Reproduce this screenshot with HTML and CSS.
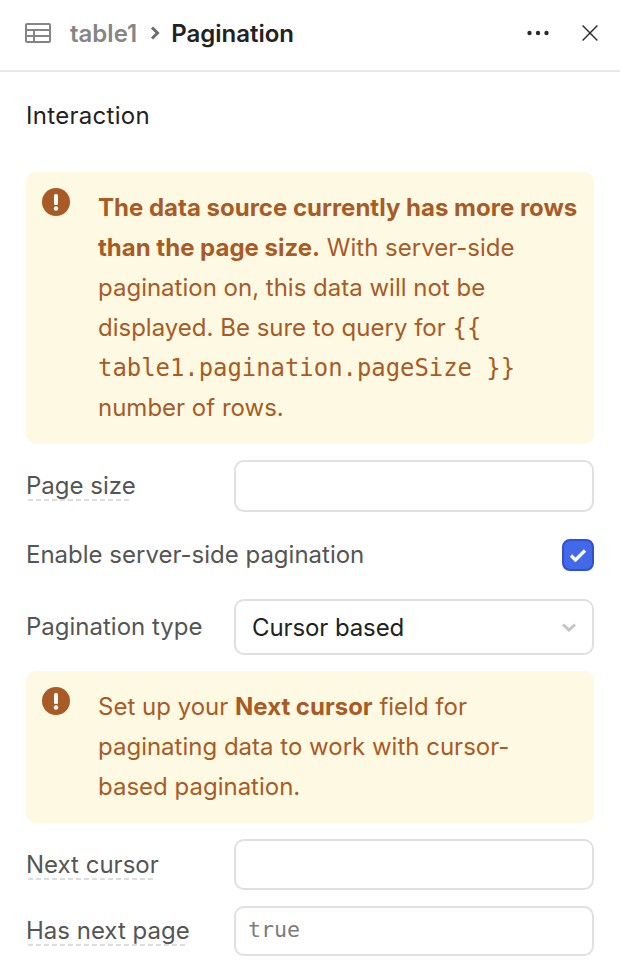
FILE: index.html
```html
<!DOCTYPE html>
<html lang="en">
<head>
<meta charset="utf-8">
<title>Pagination</title>
<link rel="stylesheet" href="styles.css">
</head>
<body>
<header class="header">
  <svg class="table-icon" width="26" height="20" viewBox="0 0 26 20" fill="none" stroke="#858585" stroke-width="2"><rect x="1" y="1" width="24" height="18" rx="1"/><path d="M1 7h24M1 13h24M9 7v12"/></svg>
  <span class="crumb">table1</span>
  <svg class="crumb-sep" width="10" height="14" viewBox="0 0 10 14" fill="none" stroke="#6b6b6b" stroke-width="3"><path d="M2 1.5 7.5 7 2 12.5"/></svg>
  <span class="title">Pagination</span>
  <span class="spacer"></span>
  <svg class="more" width="22" height="6" viewBox="0 0 22 6" fill="#2a2a2a"><circle cx="2.5" cy="3" r="2.2"/><circle cx="11" cy="3" r="2.2"/><circle cx="19.5" cy="3" r="2.2"/></svg>
  <svg class="close" width="16" height="16" viewBox="0 0 16 16" fill="none" stroke="#2a2a2a" stroke-width="1.4"><path d="M.6.6l14.8 14.8M15.4.6.6 15.4"/></svg>
</header>
<main class="panel">
  <h2 class="section">Interaction</h2>

  <div class="alert alert-large">
    <svg class="alert-icon" width="28" height="28" viewBox="0 0 28 28"><circle cx="14" cy="14" r="14" fill="#a95b25"/><rect x="12" y="6" width="4" height="11" rx="1.5" fill="#fff"/><circle cx="14" cy="20.5" r="2.2" fill="#fff"/></svg>
    <p class="alert-text"><strong>The data source currently has more rows than the page size.</strong> With server-side pagination on, this data will not be displayed. Be sure to query for <code>{{ table1.pagination.pageSize }}</code> number of rows.</p>
  </div>

  <div class="row row-page-size">
    <span class="label dashed">Page size</span>
    <div class="field"></div>
  </div>

  <div class="row row-check">
    <span class="label">Enable server-side pagination</span>
    <span class="checkbox"><svg width="18" height="14" viewBox="0 0 18 14" fill="none" stroke="#fff" stroke-width="3.2"><path d="M2 7.5 6.5 12 16 2.5"/></svg></span>
  </div>

  <div class="row row-type">
    <span class="label">Pagination type</span>
    <div class="field field-select">
      <span class="value">Cursor based</span>
      <svg width="14" height="9" viewBox="0 0 14 9" fill="none" stroke="#c4c4c4" stroke-width="3"><path d="M1 1.5 7 7l6-5.5"/></svg>
    </div>
  </div>

  <div class="alert alert-small">
    <svg class="alert-icon" width="28" height="28" viewBox="0 0 28 28"><circle cx="14" cy="14" r="14" fill="#a95b25"/><rect x="12" y="6" width="4" height="11" rx="1.5" fill="#fff"/><circle cx="14" cy="20.5" r="2.2" fill="#fff"/></svg>
    <p class="alert-text">Set up your <strong>Next cursor</strong> field for paginating data to work with cursor-based pagination.</p>
  </div>

  <div class="row row-next">
    <span class="label dashed">Next cursor</span>
    <div class="field field-next"></div>
  </div>

  <div class="row row-has-next">
    <span class="label dashed">Has next page</span>
    <div class="field field-code"><span class="placeholder">true</span></div>
  </div>
</main>
</body>
</html>
```

FILE: styles.css
```css
* { box-sizing: border-box; }
html, body { margin: 0; padding: 0; }
body {
  width: 620px;
  height: 970px;
  overflow: hidden;
  background: #fff;
  font-family: Inter, "Liberation Sans", sans-serif;
  font-size: 24px;
  color: #555;
}
.header {
  display: flex;
  align-items: center;
  height: 72px;
  padding: 0 22px 4px 25px;
  border-bottom: 2px solid #e9e9e9;
}
.table-icon { flex: none; }
.crumb { margin-left: 19px; color: #858585; font-weight: 600; }
.crumb-sep { margin: 0 11px 0 13px; }
.title { color: #222; font-weight: 600; }
.spacer { flex: 1; }
.more { margin-right: 33px; }
.panel { padding: 0 26px; }
.section {
  margin: 0;
  padding-top: 28px;
  height: 100px;
  font-size: 24px;
  line-height: 32px;
  font-weight: 400;
  letter-spacing: 0.3px;
  color: #222;
}
.alert {
  display: flex;
  background: #fef9e2;
  border-radius: 10px;
  color: #a95b25;
  padding: 16px;
}
.alert-icon { flex: none; margin-right: 28px; }
.alert-text { margin: 0; line-height: 40px; }
.alert-text strong { font-weight: 700; }
.alert-text code {
  font-family: "DejaVu Sans Mono", "Liberation Mono", monospace;
  font-size: 23.9px;
}
.alert-large { height: 272px; }
.alert-small { height: 152px; margin-top: 16px; }
.row { display: flex; align-items: center; justify-content: space-between; }
.label { line-height: 32px; white-space: nowrap; }
.dashed {
  line-height: 30px;
  background: repeating-linear-gradient(90deg, #dcdcdc 0 5px, transparent 5px 8px) 2px bottom / calc(100% - 6px) 2px no-repeat;
}
.field {
  width: 360px;
  height: 52px;
  border: 2px solid #e0e0e0;
  border-radius: 10px;
  background: #fff;
}
.field-next { height: 51px; }
.field-select {
  display: flex;
  align-items: center;
  justify-content: space-between;
  height: 56px;
  padding: 0 16px;
  color: #222;
  letter-spacing: -0.1px;
}
.field-code {
  height: 50px;
  display: flex;
  align-items: center;
  padding: 0 0 4px 12px;
}
.placeholder {
  font-family: "DejaVu Sans Mono", "Liberation Mono", monospace;
  font-size: 21.6px;
  color: #7c7c7c;
}
.row-page-size { margin-top: 16px; }
.row-check { margin-top: 15px; height: 56px; }
.row-type { margin-top: 16px; }
.row-next { margin-top: 16px; }
.row-has-next { margin-top: 16px; }
.checkbox {
  display: flex;
  align-items: center;
  justify-content: center;
  width: 32px;
  height: 32px;
  border-radius: 8px;
  background: #4169ea;
  border: 2px solid #2f50cf;
}
```
